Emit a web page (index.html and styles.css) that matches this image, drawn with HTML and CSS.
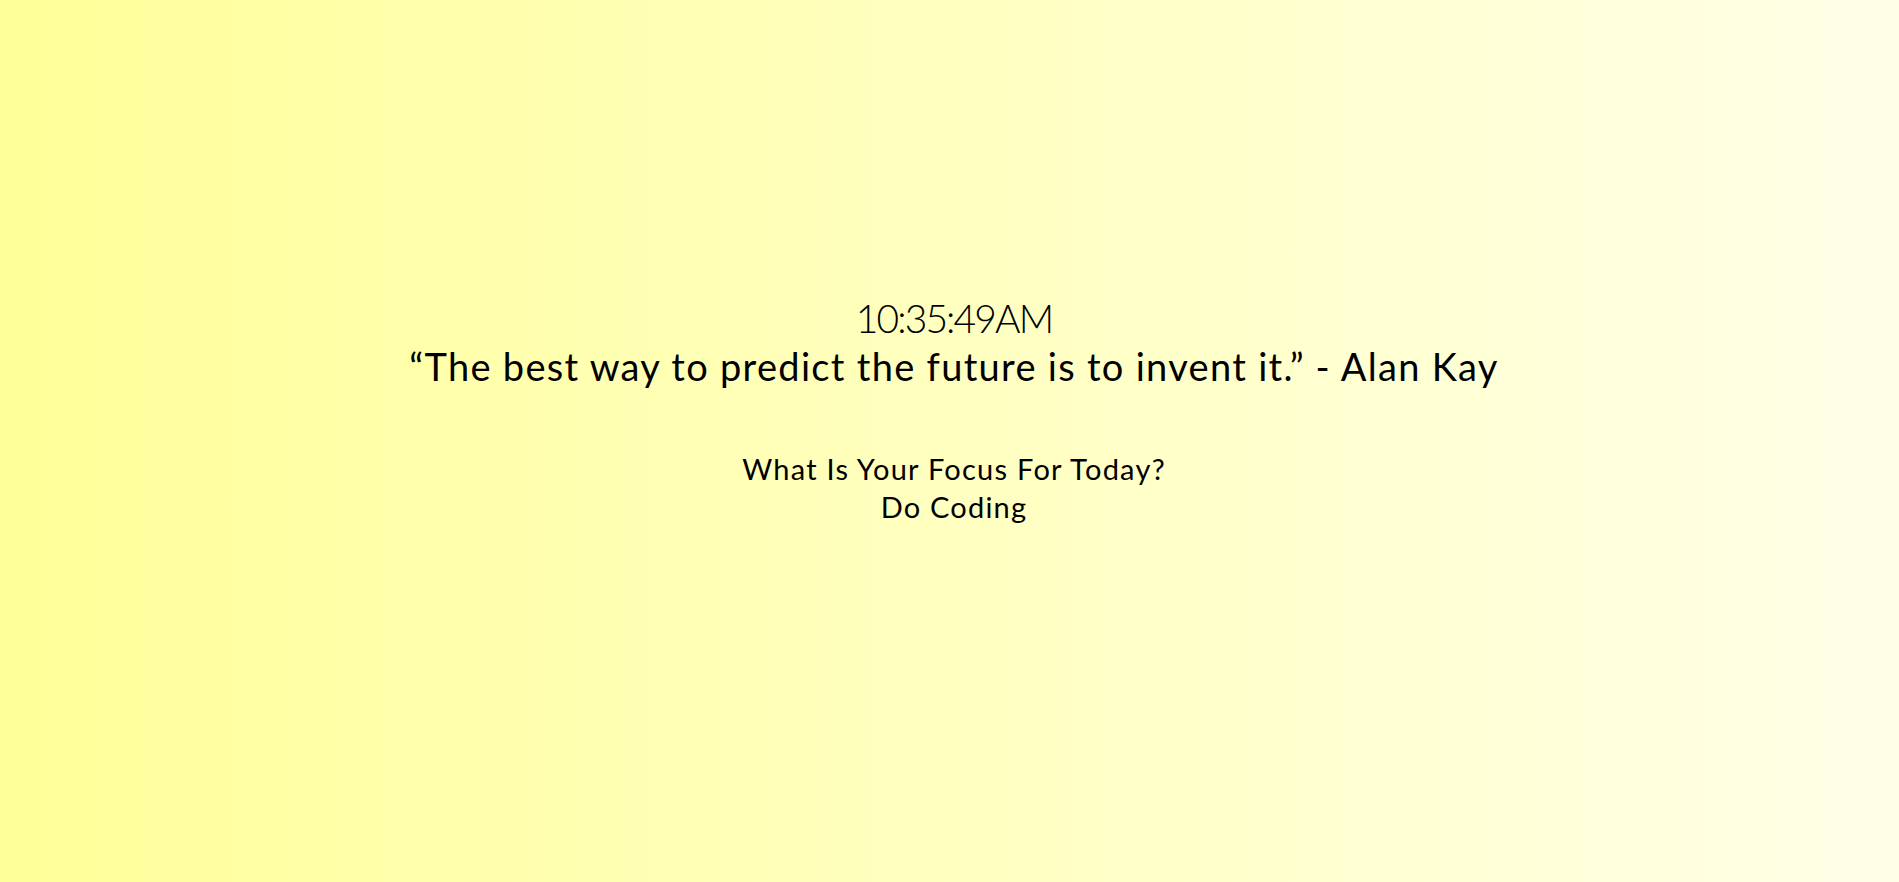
FILE: index.html
```html
<!DOCTYPE html>
<html lang="en">
<head>
<meta charset="utf-8">
<title>Momentum</title>
<link rel="stylesheet" href="styles.css">
</head>
<body>
<main class="dashboard">
  <div class="time">10:35:49AM</div>
  <div class="quote">“The best way to predict the future is to invent it.” - Alan Kay</div>
  <section class="focus">
    <h2 class="focus-label">What Is Your Focus For Today?</h2>
    <div class="focus-value">Do Coding</div>
  </section>
</main>
</body>
</html>
```
FILE: styles.css
```css
html, body {
  margin: 0;
  height: 100%;
}
body {
  background: linear-gradient(to right, #ffff99, #ffffe8);
  font-family: Lato, "Noto Sans", sans-serif;
  color: #000;
}
.dashboard {
  height: 100%;
  display: flex;
  flex-direction: column;
  align-items: center;
  justify-content: flex-start;
  padding-top: 294px;
  padding-left: 9px;
  box-sizing: border-box;
  text-align: center;
}
.time {
  font-size: 39px;
  font-weight: 300;
  line-height: 48px;
  letter-spacing: -1.9px;
}
.quote {
  font-size: 38px;
  line-height: 48px;
  letter-spacing: 1.3px;
}
.focus {
  margin-top: 60px;
}
.focus-label {
  margin: 0;
  font-size: 29px;
  font-weight: 400;
  line-height: 38px;
  letter-spacing: 1.25px;
}
.focus-value {
  font-size: 29px;
  line-height: 38px;
  letter-spacing: 1.2px;
}
```
